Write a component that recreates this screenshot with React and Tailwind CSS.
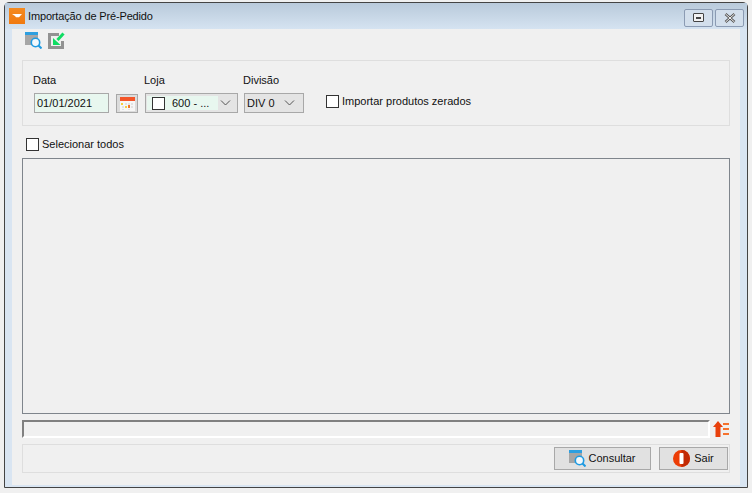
import { useState } from "react";

const font = { fontFamily: '"Liberation Sans", Arial, sans-serif' };

function SearchWindowIcon() {
  return (
    <svg width="17" height="17" viewBox="0 0 17 17" className="shrink-0">
      <rect x="0" y="0" width="13" height="3" fill="#2d9fe0" />
      <rect x="0" y="3" width="13" height="10" fill="#a6a6a6" />
      <circle cx="10.500" cy="10.500" r="4.200" fill="#f2f8fc" stroke="#1d9ae2" strokeWidth="1.600" />
      <path d="M13.500 13.500l3 3" stroke="#1d9ae2" strokeWidth="2" />
    </svg>
  );
}

function ImportIcon() {
  return (
    <svg width="17" height="17" viewBox="0 0 17 17" className="shrink-0">
      <path d="M0 1h11v3H3v10h10V9h3v8H0z" fill="#929292" />
      <path d="M15.500 1.500L9.500 8" stroke="#0fdc62" strokeWidth="3" fill="none" />
      <path d="M5 6v7h7.500L5 6z" fill="#0fdc62" />
    </svg>
  );
}

function CalendarIcon() {
  return (
    <svg width="15" height="14" viewBox="0 0 15 14">
      <rect x="0" y="2" width="15" height="12" fill="#f6f6f6" />
      <rect x="0" y="0" width="15" height="4" fill="#f4562a" />
      <path d="M5 6h2v2H5zM8 6h2v2H8zM11 6h2v2h-2zM2 9h2v2H2zM11 9h2v2h-2zM2 12h2v1H2zM8 12h2v1H8z" fill="#e2e2e2" />
      <rect x="1" y="6" width="2" height="2" fill="#f7cf3c" />
      <rect x="5" y="9" width="2" height="2" fill="#f7cf3c" />
      <rect x="8" y="8" width="2" height="3" fill="#f4762a" />
    </svg>
  );
}

function Chevron() {
  return (
    <svg width="11" height="6" viewBox="0 0 11 6" className="shrink-0">
      <path d="M1 0.500l4.500 4.500 4.500-4.500" fill="none" stroke="#555" strokeWidth="1" />
    </svg>
  );
}

function ExitIcon() {
  return (
    <svg width="17" height="17" viewBox="0 0 17 17" className="shrink-0">
      <circle cx="8.500" cy="8.500" r="8.500" fill="#ec3d06" />
      <path d="M8.500 0a8.500 8.500 0 0 1 0 17z" fill="#c22a04" />
      <rect x="6.500" y="3" width="4" height="11" rx="1" fill="#fff" />
    </svg>
  );
}

function SortIcon() {
  return (
    <svg width="17" height="16" viewBox="0 0 17 16">
      <path d="M5 0l5 6H7.500v10h-5V6H0z" fill="#e8400c" />
      <path d="M10 2h6v2h-6zM10 7h6v2h-6zM10 12h6v2h-6z" fill="#f5722e" />
    </svg>
  );
}

function Check({ checked, onChange }) {
  return (
    <button
      type="button"
      onClick={onChange}
      className="w-[13px] h-[13px] border border-[#333] bg-white flex items-center justify-center shrink-0"
    >
      {checked && <span className="block w-[7px] h-[7px] bg-[#333]" />}
    </button>
  );
}

export default function App() {
  const [zerados, setZerados] = useState(false);
  const [todos, setTodos] = useState(false);
  const [loja, setLoja] = useState(false);

  return (
    <div className="w-[752px] h-[493px] bg-[#f0f0f0] pl-1 pt-0.5 text-[11px] text-[#111] overflow-hidden" style={font}>
      <div className="w-[744px] h-[486px] border border-[#444] rounded-t-[5px] bg-[#d9e5f2] flex flex-col">
        <div className="h-[26px] bg-gradient-to-b from-[#b9cadb] to-[#d5e3f1] flex items-center pl-1 pr-[3px] shrink-0">
          <div className="w-[16px] h-[16px] bg-gradient-to-b from-[#f58a1f] to-[#f07a10] flex items-center justify-center">
            <svg width="10" height="4" viewBox="0 0 10 6" preserveAspectRatio="none">
              <path d="M0 0h10L7 5H4L3 3z" fill="#fff" />
            </svg>
          </div>
          <span className="ml-[3px] text-[#111] tracking-[-0.15px]">Importação de Pré-Pedido</span>
          <div className="ml-auto flex gap-[2px] mt-[3px]">
            <button className="w-[29px] h-[18px] border border-[#8b9bb3] rounded-[2px] bg-[#d3dfec] flex items-center justify-center">
              <span className="w-[11px] h-[9px] border border-[#444] rounded-[1px] bg-[#f2f2f2] flex items-center justify-center">
                <span className="block w-[5px] h-[2px] bg-[#444]" />
              </span>
            </button>
            <button className="w-[29px] h-[18px] border border-[#8b9bb3] rounded-[2px] bg-[#d3dfec] flex items-center justify-center">
              <svg width="12" height="10" viewBox="0 0 12 10">
                <path d="M1.500 1l9 8M10.500 1l-9 8" stroke="#555" strokeWidth="2.600" />
                <path d="M1.500 1l9 8M10.500 1l-9 8" stroke="#f4f4f4" strokeWidth="1" />
              </svg>
            </button>
          </div>
        </div>

        <div className="flex-1 mx-[7px] mb-[2px] bg-[#f0f0f0] px-[10px] flex flex-col">
          <div className="h-[31px] flex items-start gap-[6px] pl-[3px] pt-[3px]">
            <SearchWindowIcon />
            <ImportIcon />
          </div>

          <div className="h-[66px] border border-[#dedede] flex items-start pl-[10px] pt-[11px]">
            <div className="flex flex-col w-[83px]">
              <span className="leading-[16px] h-[21px]">Data</span>
              <input
                defaultValue="01/01/2021"
                className="ml-px w-[75px] h-[20px] border border-[#a8a8a8] bg-[#e8f7ef] pl-[2px] text-[11px] outline-none"
              />
            </div>
            <button className="mt-[22px] w-[22px] h-[19px] border border-[#a8a8a8] bg-[#dcdcdc] flex items-center justify-center">
              <CalendarIcon />
            </button>
            <div className="flex flex-col ml-[6px] w-[99px]">
              <span className="leading-[16px] h-[21px]">Loja</span>
              <div className="w-[93px] h-[20px] border border-[#a8a8a8] bg-[#e4e4e4] flex items-center pl-px pr-[6px] ml-px">
                <div className="w-[71px] h-[14px] bg-[#e8f7ef] flex items-center pl-[5px]">
                  <Check checked={loja} onChange={() => setLoja(!loja)} />
                  <span className="ml-[7px]">600 - ...</span>
                </div>
                <span className="ml-auto"><Chevron /></span>
              </div>
            </div>
            <div className="flex flex-col">
              <span className="leading-[16px] h-[21px]">Divisão</span>
              <div className="w-[60px] h-[20px] border border-[#a8a8a8] bg-[#e4e4e4] flex items-center pl-[2px] pr-[8px] ml-px">
                <span>DIV 0</span>
                <span className="ml-auto"><Chevron /></span>
              </div>
            </div>
            <div className="ml-[22px] mt-[22px] flex items-center h-[15px]">
              <Check checked={zerados} onChange={() => setZerados(!zerados)} />
              <span className="ml-[3px]">Importar produtos zerados</span>
            </div>
          </div>

          <div className="h-[32px] flex items-center pl-[4px] pt-[4px]">
            <Check checked={todos} onChange={() => setTodos(!todos)} />
            <span className="ml-[3px]">Selecionar todos</span>
          </div>

          <div className="h-[256px] border border-[#7f858c] bg-[#f0f0f0]" />

          <div className="mt-[6px] flex items-center">
            <div className="w-[688px] h-[18px] border-t-2 border-l-2 border-t-[#808080] border-l-[#808080] border-b-2 border-b-white border-r-2 border-r-white" />
            <span className="ml-[3px]"><SortIcon /></span>
          </div>

          <div className="mt-[6px] h-[29px] border border-[#dedede] flex items-center justify-end pr-[1px] gap-[8px]">
            <button className="w-[97px] h-[23px] border border-[#a8a8a8] bg-[#e1e1e1] flex items-center justify-center gap-[2px]">
              <SearchWindowIcon />
              <span>Consultar</span>
            </button>
            <button className="w-[69px] h-[23px] border border-[#a8a8a8] bg-[#e1e1e1] flex items-center justify-center gap-[4px]">
              <ExitIcon />
              <span>Sair</span>
            </button>
          </div>
        </div>
      </div>
    </div>
  );
}
